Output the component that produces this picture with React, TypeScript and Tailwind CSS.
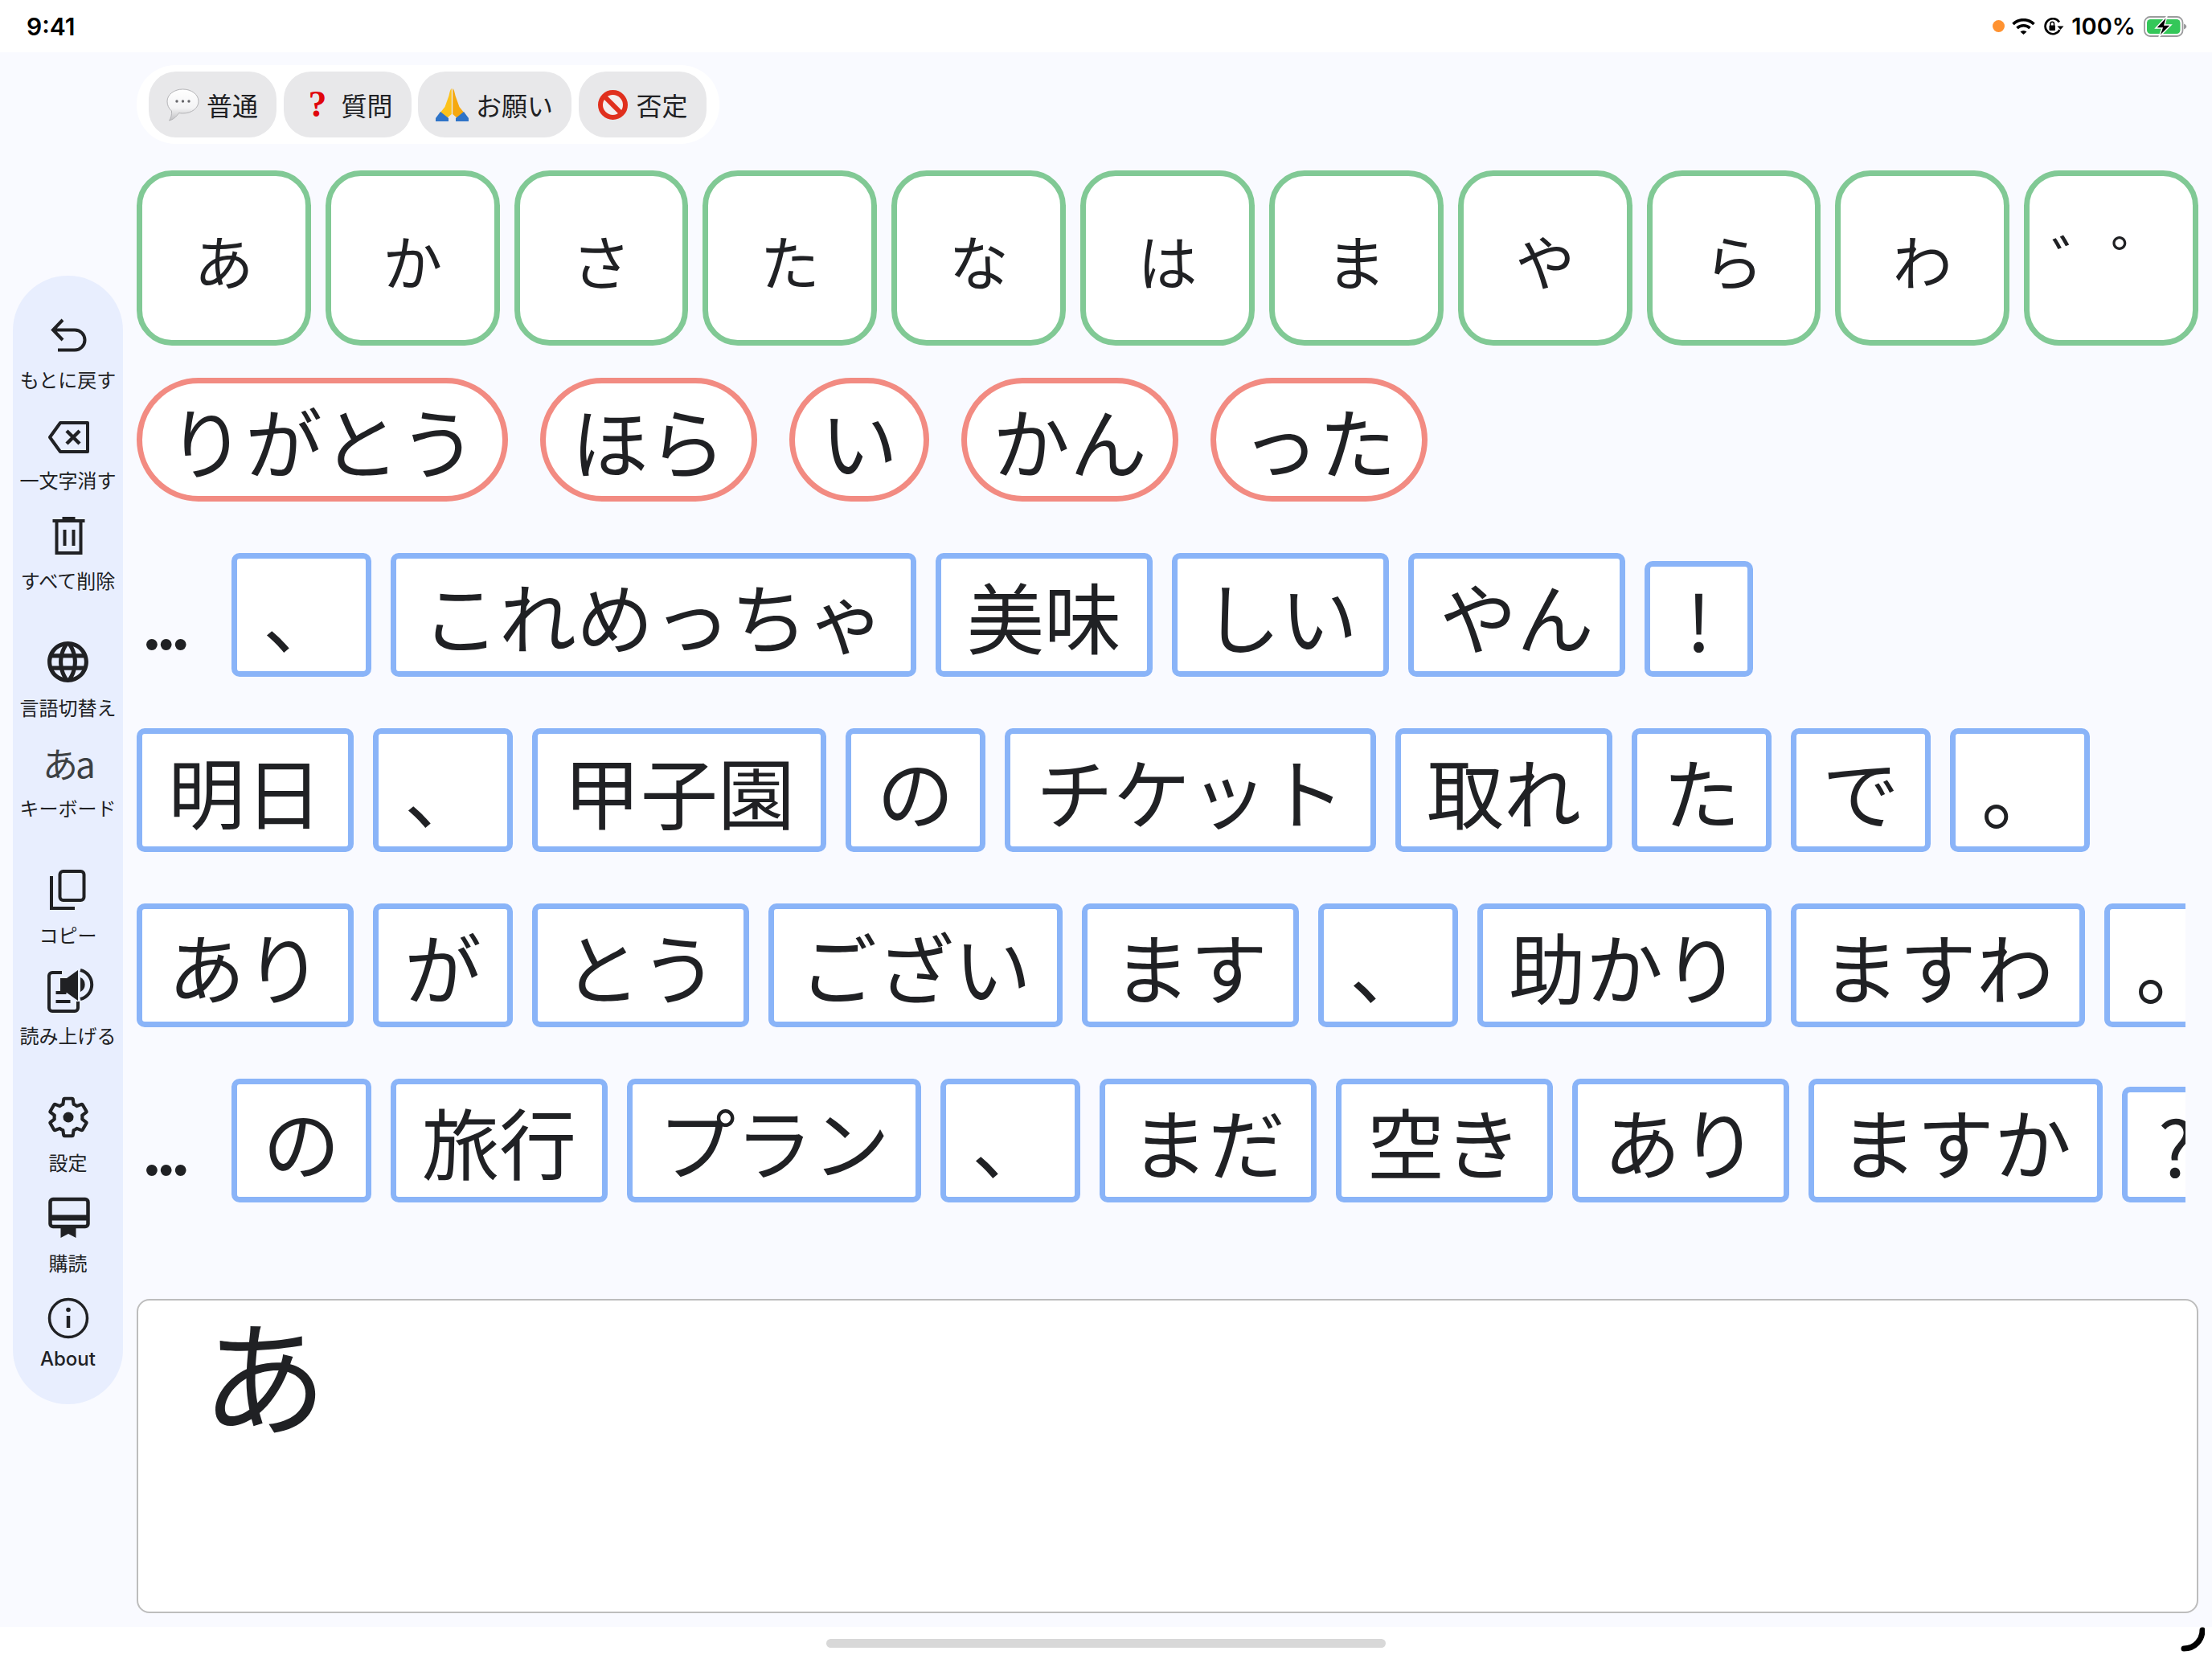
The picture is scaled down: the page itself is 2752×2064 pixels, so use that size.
import { MdLanguage } from 'react-icons/md';

const textFont = "font-['Noto_Sans_CJK_JP','Noto_Sans',sans-serif]";

const kanaKeys = ['あ', 'か', 'さ', 'た', 'な', 'は', 'ま', 'や', 'ら', 'わ', '゛゜'];
const phrases = ['りがとう', 'ほら', 'い', 'かん', 'った'];

const wordRows = [
  { more: true, words: ['、', 'これめっちゃ', '美味', 'しい', 'やん', '!'] },
  { more: false, words: ['明日', '、', '甲子園', 'の', 'チケット', '取れ', 'た', 'で', '。'] },
  { more: false, words: ['あり', 'が', 'とう', 'ござい', 'ます', '、', '助かり', 'ますわ', '。'] },
  { more: true, words: ['の', '旅行', 'プラン', '、', 'まだ', '空き', 'あり', 'ますか', '?'] },
];

const SpeechIcon = () => (
  <svg width="41" height="41" viewBox="0 0 41 41">
    <defs>
      <linearGradient id="bubble" x1="0" y1="0" x2="0" y2="1">
        <stop offset="0" stopColor="#ffffff" />
        <stop offset="0.6" stopColor="#f4f4f5" />
        <stop offset="1" stopColor="#bfbfc2" />
      </linearGradient>
    </defs>
    <path
      d="M20.5 1C31 1 40 7.5 40 16s-8.500 15-19.500 15c-2 0-3.500-.2-5-.5C13 35 8 39 3.500 40c2-3 3.500-7 3-12C3 25 1 21 1 16 1 7.500 10 1 20.500 1z"
      fill="url(#bubble)"
      stroke="#b4b4b7"
      strokeWidth="1"
    />
    <circle cx="13" cy="16" r="1.700" fill="#66666a" />
    <circle cx="20.500" cy="16" r="1.700" fill="#66666a" />
    <circle cx="28" cy="16" r="1.700" fill="#66666a" />
  </svg>
);

const PrayIcon = () => (
  <svg width="41" height="41" viewBox="0 0 41 41">
    <path d="M19.800 0c-1.500 1-2.300 4-3.300 9L11.500 23 5 31l8 7 6.800-6z" fill="#fcc21b" />
    <path d="M21.200 0c1.500 1 2.300 4 3.300 9l5 14L36 31l-8 7-6.800-6z" fill="#f5a80f" />
    <path d="M0 41v-4l6-8 10 8v4zM41 41v-4l-6-8-10 8v4z" fill="#2f74c8" />
  </svg>
);

const NoEntryIcon = () => (
  <svg width="41" height="41" viewBox="0 0 41 41">
    <circle cx="20.500" cy="20.500" r="15.500" fill="#f3eeee" stroke="#e0301e" strokeWidth="6" />
    <path d="M9.500 9.500l22 22" stroke="#e0301e" strokeWidth="6" />
  </svg>
);

const chips = [
  { label: '普通', icon: <SpeechIcon /> },
  {
    label: '質問',
    icon: <span className="w-[41px] text-center text-[46px] leading-none font-bold text-[#e0060c] font-['Liberation_Serif',serif]">?</span>,
  },
  { label: 'お願い', icon: <PrayIcon /> },
  { label: '否定', icon: <NoEntryIcon /> },
];

// sidebar icons share a 64px box
const Glyph = ({ children }: { children: React.ReactNode }) => (
  <svg width="64" height="64" viewBox="0 0 64 64" fill="none" stroke="#202124" strokeWidth="4">
    {children}
  </svg>
);

const sideGroups = [
  [
    {
      label: 'もとに戻す',
      icon: (
        <Glyph>
          <path d="M25 14L13 26.500 25 39M13 26.500h27a12.500 12.500 0 0 1 0 25H19" />
        </Glyph>
      ),
    },
    {
      label: '一文字消す',
      icon: (
        <Glyph>
          <path d="M22 17h34v36H22L9 35z" strokeLinejoin="round" />
          <path d="M30 27l16 16M46 27L30 43" strokeWidth="4.500" />
        </Glyph>
      ),
    },
    {
      label: 'すべて削除',
      icon: (
        <Glyph>
          <path d="M12.500 14h40M24.500 11h16M17.500 14v40h30V14M27.500 25v20M38.500 25v20" />
        </Glyph>
      ),
    },
  ],
  [
    { label: '言語切替え', icon: <MdLanguage size={61} color="#202124" /> },
    {
      label: 'キーボード',
      icon: <span className={`${textFont} text-[44px] leading-none text-[#3c4043] tracking-[-3px]`}>あa</span>,
    },
  ],
  [
    {
      label: 'コピー',
      icon: (
        <Glyph>
          <rect x="21.500" y="9" width="30" height="36" rx="4" />
          <path d="M11 15v40h29" />
        </Glyph>
      ),
    },
    {
      label: '読み上げる',
      icon: (
        <Glyph>
          <path d="M24 10H12a4 4 0 0 0-4 4v40a4 4 0 0 0 4 4h28a4 4 0 0 0 4-4v-8" />
          <path d="M22 17h8l14-10v38L30 35h-8z" fill="#202124" stroke="none" />
          <path d="M16.500 35h13M16.500 46h18" />
          <path d="M47 16a10 10 0 0 1 0 18z" fill="#202124" stroke="none" />
          <path d="M47 7a18.500 18.500 0 0 1 0 36" />
        </Glyph>
      ),
    },
  ],
  [
    {
      label: '設定',
      icon: (
        <svg width="58" height="58" viewBox="0 0 24 24" fill="none" stroke="#202124" strokeWidth="1.700" strokeLinejoin="round">
          <path d="M19.140 12.940c.04-.3.06-.61.06-.94 0-.32-.02-.64-.07-.94l2.030-1.580c.18-.14.23-.41.12-.61l-1.920-3.320c-.12-.22-.37-.29-.59-.22l-2.390.96c-.5-.38-1.030-.7-1.620-.94l-.36-2.540c-.04-.24-.24-.41-.48-.41h-3.840c-.24 0-.43.17-.47.41l-.36 2.540c-.59.24-1.130.57-1.620.94l-2.390-.96c-.22-.08-.47 0-.59.22L2.740 8.870c-.12.21-.08.47.12.61l2.030 1.580c-.05.3-.09.63-.09.94s.02.64.07.94l-2.030 1.580c-.18.14-.23.41-.12.61l1.920 3.320c.12.22.37.29.59.22l2.390-.96c.5.38 1.030.7 1.620.94l.36 2.540c.05.24.24.41.48.41h3.840c.24 0 .44-.17.47-.41l.36-2.540c.59-.24 1.130-.56 1.620-.94l2.390.96c.22.08.47 0 .59-.22l1.920-3.320c.12-.22.07-.47-.12-.61l-2.010-1.580z" />
          <circle cx="12" cy="12" r="2.700" fill="#202124" stroke="none" />
        </svg>
      ),
    },
    {
      label: '購読',
      icon: (
        <Glyph>
          <rect x="9.500" y="9" width="47" height="34" rx="3.500" strokeWidth="4.500" />
          <path d="M9.500 32h47" strokeWidth="7" />
          <path d="M22.500 43h19v14L32 52l-9.500 5z" fill="#202124" stroke="none" />
        </Glyph>
      ),
    },
    {
      label: 'About',
      icon: (
        <Glyph>
          <circle cx="32" cy="32" r="23.500" strokeWidth="3.500" />
          <path d="M32 29v15" strokeWidth="4.500" />
          <circle cx="32" cy="21.500" r="2.800" fill="#202124" stroke="none" />
        </Glyph>
      ),
    },
  ],
];

const StatusBar = () => (
  <div className="h-[65px] shrink-0 bg-white flex items-center justify-between pl-[33px] pr-[31px]">
    <span className="text-[30px] font-semibold leading-none text-black font-['Inter',sans-serif]">9:41</span>
    <div className="flex items-center">
      <span className="w-[15px] h-[15px] rounded-full bg-[#ff9230]" />
      <svg className="ml-[9px]" width="29" height="20" viewBox="0 0 29 20" fill="none" stroke="#000" strokeWidth="3.600">
        <path d="M1.500 7a18.500 18.500 0 0 1 26 0" />
        <path d="M6.500 12a11.500 11.500 0 0 1 16 0" />
        <path d="M10.500 16.500L14.500 20l4-3.500a6 6 0 0 0-8 0z" fill="#000" stroke="none" />
      </svg>
      <svg className="ml-[10px]" width="26" height="22" viewBox="0 0 26 22" fill="none" stroke="#000" strokeWidth="2.600">
        <path d="M20 5.500A9.500 9.500 0 1 0 20.500 15" />
        <path d="M17.500 10.500h8L21.500 15z" fill="#000" stroke="none" />
        <rect x="7.500" y="9.500" width="7.500" height="6.500" rx="1" fill="#000" stroke="none" />
        <path d="M9 10V7.500a2.200 2.200 0 0 1 4.500 0V10" strokeWidth="1.500" />
      </svg>
      <span className="ml-[9px] text-[29px] font-semibold leading-none text-black font-['Inter',sans-serif]">100%</span>
      <svg className="ml-[10px]" width="54" height="26" viewBox="0 0 54 26">
        <rect x="1" y="1" width="47.500" height="24" rx="7" fill="none" stroke="#9b9b9d" strokeWidth="1.800" />
        <rect x="4" y="4" width="41.500" height="18" rx="4.500" fill="#34c759" />
        <path d="M50 9.500c2 .8 3.300 2 3.300 3.500s-1.300 2.700-3.300 3.500z" fill="#9b9b9d" />
        <path d="M29 0L15 15h8L19 26l15-15h-8z" fill="#000" stroke="#fff" strokeWidth="1.500" />
      </svg>
    </div>
  </div>
);

const Sidebar = () => (
  <div className="w-[170px] shrink-0 pl-4 flex items-center">
    <div className={`w-[137px] rounded-[68px] bg-[#e8eefe] pt-[41px] pb-[14px] flex flex-col gap-[33px] ${textFont}`}>
      {sideGroups.map((group, i) => (
        <div key={i} className="flex flex-col">
          {group.map(item => (
            <div key={item.label} className="h-[125px] flex flex-col items-center">
              <div className="h-[64px] flex items-center justify-center">{item.icon}</div>
              <span
                className={
                  item.label === 'About'
                    ? "mt-[2px] text-[24px] leading-[34px] font-medium whitespace-nowrap text-[#202124] font-['Inter',sans-serif]"
                    : 'mt-[7px] text-[24px] leading-[34px] whitespace-nowrap text-[#202124]'
                }
              >
                {item.label}
              </span>
            </div>
          ))}
        </div>
      ))}
    </div>
  </div>
);

const Word = ({ text }: { text: string }) => {
  const latin = text === '!' || text === '?';
  return (
    <div
      className={
        latin
          ? 'shrink-0 w-[135px] h-[144px] border-[7px] border-[#8ab4f8] rounded-[10px] bg-white flex items-center justify-center text-[96px] leading-none whitespace-nowrap'
          : 'shrink-0 h-[154px] border-[7px] border-[#8ab4f8] rounded-[10px] bg-white px-8 flex items-center text-[96px] leading-none whitespace-nowrap'
      }
    >
      {text}
    </div>
  );
};

export default function App() {
  return (
    <div className={`w-[2752px] h-[2064px] bg-white flex flex-col overflow-hidden text-[#202124] ${textFont}`}>
      <StatusBar />

      <div className="flex-1 flex bg-[#f9faff]">
        <Sidebar />

        <div className="w-[2565px] pt-4 flex flex-col">
          {/* Tone chips */}
          <div className="self-start flex gap-[8.5px] bg-white rounded-[48px] pl-[15px] pr-[16px] py-2">
            {chips.map(chip => (
              <div key={chip.label} className="h-[82px] pl-[22px] pr-[23px] rounded-[34px] bg-[#e8e8ea] flex items-center gap-[9px]">
                {chip.icon}
                <span className="text-[32px] leading-none text-[#202124]">{chip.label}</span>
              </div>
            ))}
          </div>

          {/* Kana keys */}
          <div className="mt-[33px] grid grid-cols-11 gap-[18px]">
            {kanaKeys.map(key => (
              <div key={key} className="h-[218px] border-[7px] border-[#81c995] rounded-[44px] bg-white pt-[3px] flex items-center justify-center text-[74px] leading-none">
                {key}
              </div>
            ))}
          </div>

          {/* Phrase candidates */}
          <div className="mt-[40px] flex gap-10">
            {phrases.map(phrase => (
              <div key={phrase} className="h-[154px] border-[7px] border-[#f28b82] rounded-full bg-white px-8 flex items-center text-[96px] leading-none whitespace-nowrap">
                {phrase}
              </div>
            ))}
          </div>

          {/* Word candidates */}
          <div className="mt-[64px] w-[2549px] flex flex-col gap-16 overflow-hidden">
            {wordRows.map((row, i) => (
              <div key={i} className="flex items-end h-[154px]">
                {row.more && (
                  <span className="w-[118px] shrink-0 pl-[10px] pb-[15px] text-[51px] leading-none font-['Liberation_Sans',sans-serif]">•••</span>
                )}
                <div className="flex items-end gap-6">
                  {row.words.map((word, j) => (
                    <Word key={j} text={word} />
                  ))}
                </div>
              </div>
            ))}
          </div>

          {/* Input */}
          <div className="mt-[120px] h-[391px] border-2 border-[#bdbdbd] rounded-[16px] bg-white pl-[79px] pt-[4px] text-[156px] leading-[168px]">
            あ
          </div>
        </div>
      </div>

      <div className="relative h-[40px] shrink-0 bg-white flex items-center justify-center">
        <div className="w-[696px] h-[11px] rounded-full bg-[#d8d8d8]" />
        <svg className="absolute right-[9px] top-0" width="30" height="31" viewBox="0 0 30 31" fill="none" stroke="#000" strokeWidth="7" strokeLinecap="round">
          <path d="M27 4c0 12-9 23-23 23" />
        </svg>
      </div>
    </div>
  );
}
